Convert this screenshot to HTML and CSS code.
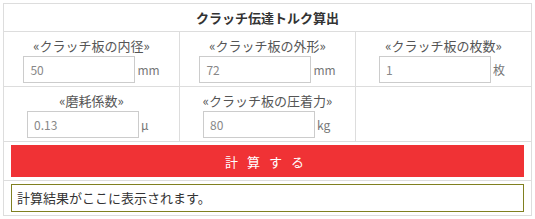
FILE: index.html
```html
<!DOCTYPE html>
<html lang="ja">
<head>
  <meta charset="UTF-8">
  <title>クラッチ伝達トルク算出</title>
  <link rel="stylesheet" href="styles.css">
</head>
<body>
  <div class="wrap">
    <table class="calc">
      <tr>
        <th colspan="3">クラッチ伝達トルク算出</th>
      </tr>
      <tr class="field-row">
        <td>
          <span class="label">«クラッチ板の内径»</span>
          <div class="field"><input type="text" value="50"><span class="unit">mm</span></div>
        </td>
        <td>
          <span class="label">«クラッチ板の外形»</span>
          <div class="field"><input type="text" value="72"><span class="unit">mm</span></div>
        </td>
        <td>
          <span class="label">«クラッチ板の枚数»</span>
          <div class="field"><input type="text" value="1"><span class="unit">枚</span></div>
        </td>
      </tr>
      <tr class="field-row">
        <td>
          <span class="label">«磨耗係数»</span>
          <div class="field"><input type="text" value="0.13"><span class="unit">μ</span></div>
        </td>
        <td>
          <span class="label">«クラッチ板の圧着力»</span>
          <div class="field"><input type="text" value="80"><span class="unit">kg</span></div>
        </td>
        <td></td>
      </tr>
      <tr>
        <td colspan="3" class="btn-cell"><button class="calc-btn">計算する</button></td>
      </tr>
      <tr>
        <td colspan="3" class="btn-cell"><div class="result">計算結果がここに表示されます。</div></td>
      </tr>
    </table>
  </div>
</body>
</html>
```

FILE: styles.css
```css
body {
  margin: 0;
  font-family: "Noto Sans CJK JP", "DejaVu Sans", sans-serif;
  font-size: 13px;
  color: #444;
  background: #fff;
}
.wrap {
  padding: 3px;
}
.calc {
  width: 529px;
  border-collapse: collapse;
  table-layout: fixed;
}
.calc th,
.calc td {
  border: 1px solid #ddd;
  text-align: center;
  vertical-align: top;
}
.calc th {
  font-size: 13px;
  font-weight: bold;
  color: #333;
  line-height: 19px;
  padding: 4px 7px;
}
.field-row td {
  height: 55px;
  padding: 4px 7px 2px;
  box-sizing: border-box;
}
.label {
  display: block;
  line-height: 19px;
  color: #555;
}
.field {
  display: flex;
  justify-content: center;
  align-items: center;
  gap: 2px;
  margin-top: 1px;
}
.field input {
  width: 112px;
  height: 27px;
  box-sizing: border-box;
  border: 1px solid #ccc;
  padding: 0 6px;
  font-family: inherit;
  font-size: 12px;
  color: #888;
  outline: none;
}
.unit {
  color: #777;
  font-size: 12px;
  min-width: 15px;
  text-align: left;
}
.btn-cell {
  padding: 3px 7px;
}
.calc-btn {
  display: block;
  width: 100%;
  height: 32px;
  border: none;
  background-color: #f03235;
  color: #fff;
  font-family: inherit;
  font-size: 13px;
  letter-spacing: 9px;
  padding-left: 9px;
  cursor: pointer;
}
.result {
  height: 28px;
  box-sizing: border-box;
  border: 1px solid #808020;
  text-align: left;
  padding: 3px 5px;
  line-height: 20px;
  color: #333;
}
```
